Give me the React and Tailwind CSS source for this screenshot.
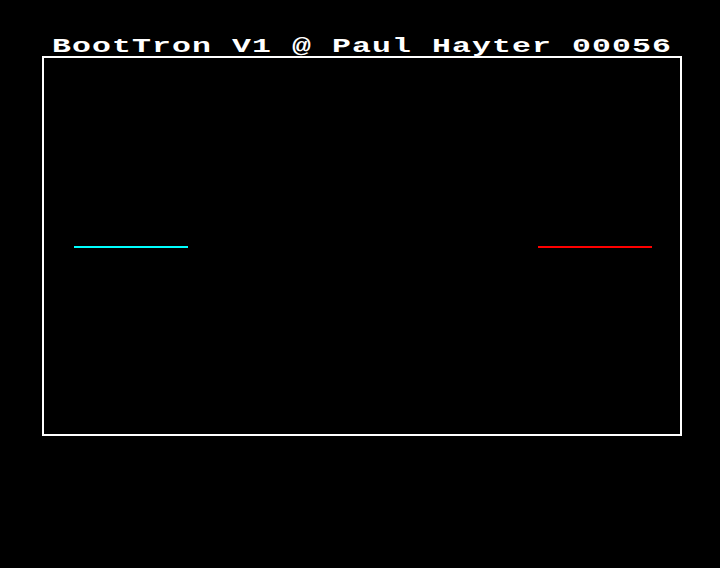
export default function App() {
  return (
    <div className="w-[720px] h-[568px] bg-black overflow-hidden">
      {/* title line */}
      <div className="h-[56px] pl-[52px] pt-[34px]">
        <div
          className="inline-block origin-left scale-x-[1.5] text-white font-bold text-[21px] leading-[18px] tracking-[0.73px] whitespace-pre"
          style={{ fontFamily: '"Liberation Mono", "DejaVu Sans Mono", monospace' }}
        >
          BootTron V1 @ Paul Hayter 00056
        </div>
      </div>

      {/* arena */}
      <div className="ml-[42px] w-[640px] h-[380px] border-2 border-white flex items-center justify-between pt-[2px] pl-[30px] pr-[28px]">
        <div className="w-[114px] h-[2px] bg-[#00ffff]" />
        <div className="w-[114px] h-[2px] bg-[#ff0000]" />
      </div>
    </div>
  );
}
